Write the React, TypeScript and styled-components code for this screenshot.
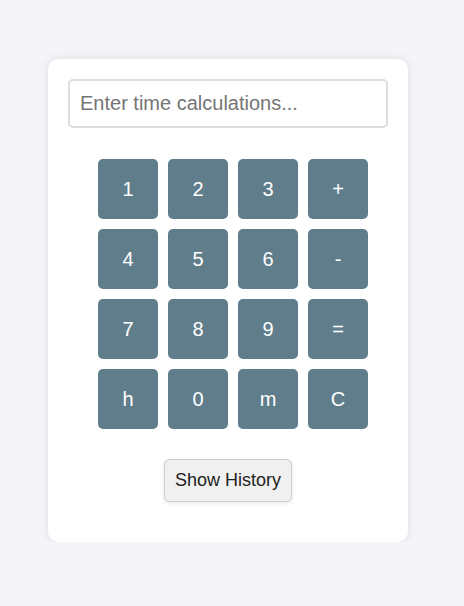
import React, { useState } from 'react';
import styled, { createGlobalStyle } from 'styled-components';

const GlobalStyle = createGlobalStyle`
  body {
    margin: 0;
    background-color: #f4f4f9;
    font-family: 'Liberation Sans', Arial, sans-serif;
  }
`;

const Page = styled.div`
  padding: 59px 0 0 48px;
`;

const Card = styled.div`
  box-sizing: border-box;
  width: 360px;
  padding: 20px 20px 40px;
  background-color: #fff;
  border-radius: 10px;
  box-shadow: 0 0 10px rgba(0, 0, 0, 0.1);
  display: flex;
  flex-direction: column;
  align-items: center;
`;

const Display = styled.input`
  box-sizing: border-box;
  width: 100%;
  height: 49px;
  padding: 10px;
  font-size: 20px;
  font-family: 'Liberation Sans', Arial, sans-serif;
  border: 2px solid #ddd;
  border-radius: 5px;
  color: #333;
  outline: none;

  &::placeholder {
    color: #757575;
  }
`;

const Keypad = styled.div`
  box-sizing: border-box;
  width: 100%;
  margin: 31px 0 30px;
  padding-left: 10px;
  display: grid;
  grid-template-columns: repeat(4, 60px);
  gap: 10px;
  justify-content: center;
`;

const Key = styled.button`
  width: 60px;
  height: 60px;
  border: none;
  border-radius: 5px;
  background-color: #607d8b;
  color: #fff;
  font-size: 20px;
  font-family: 'Liberation Sans', Arial, sans-serif;
  cursor: pointer;

  &:hover {
    background-color: #546e7a;
  }
`;

const HistoryButton = styled.button`
  padding: 10px;
  font-size: 18px;
  font-family: 'Liberation Sans', Arial, sans-serif;
  color: #222;
  background-color: #f0f0f0;
  border: 1px solid #ccc;
  border-radius: 5px;
  box-shadow: 0 2px 4px rgba(0, 0, 0, 0.08);
  cursor: pointer;
`;

const keys = ['1', '2', '3', '+', '4', '5', '6', '-', '7', '8', '9', '=', 'h', '0', 'm', 'C'];

export default function App() {
  const [value, setValue] = useState('');
  const [showHistory, setShowHistory] = useState(false);

  const press = (k: string) => {
    if (k === 'C') return setValue('');
    if (k === '=') return;
    setValue(value + k);
  };

  return (
    <>
      <GlobalStyle />
      <Page>
        <Card>
          <Display
            placeholder="Enter time calculations..."
            value={value}
            onChange={(e) => setValue(e.target.value)}
          />
          <Keypad>
            {keys.map((k) => (
              <Key key={k} onClick={() => press(k)}>
                {k}
              </Key>
            ))}
          </Keypad>
          <HistoryButton onClick={() => setShowHistory(!showHistory)}>
            {showHistory ? 'Hide History' : 'Show History'}
          </HistoryButton>
        </Card>
      </Page>
    </>
  );
}
